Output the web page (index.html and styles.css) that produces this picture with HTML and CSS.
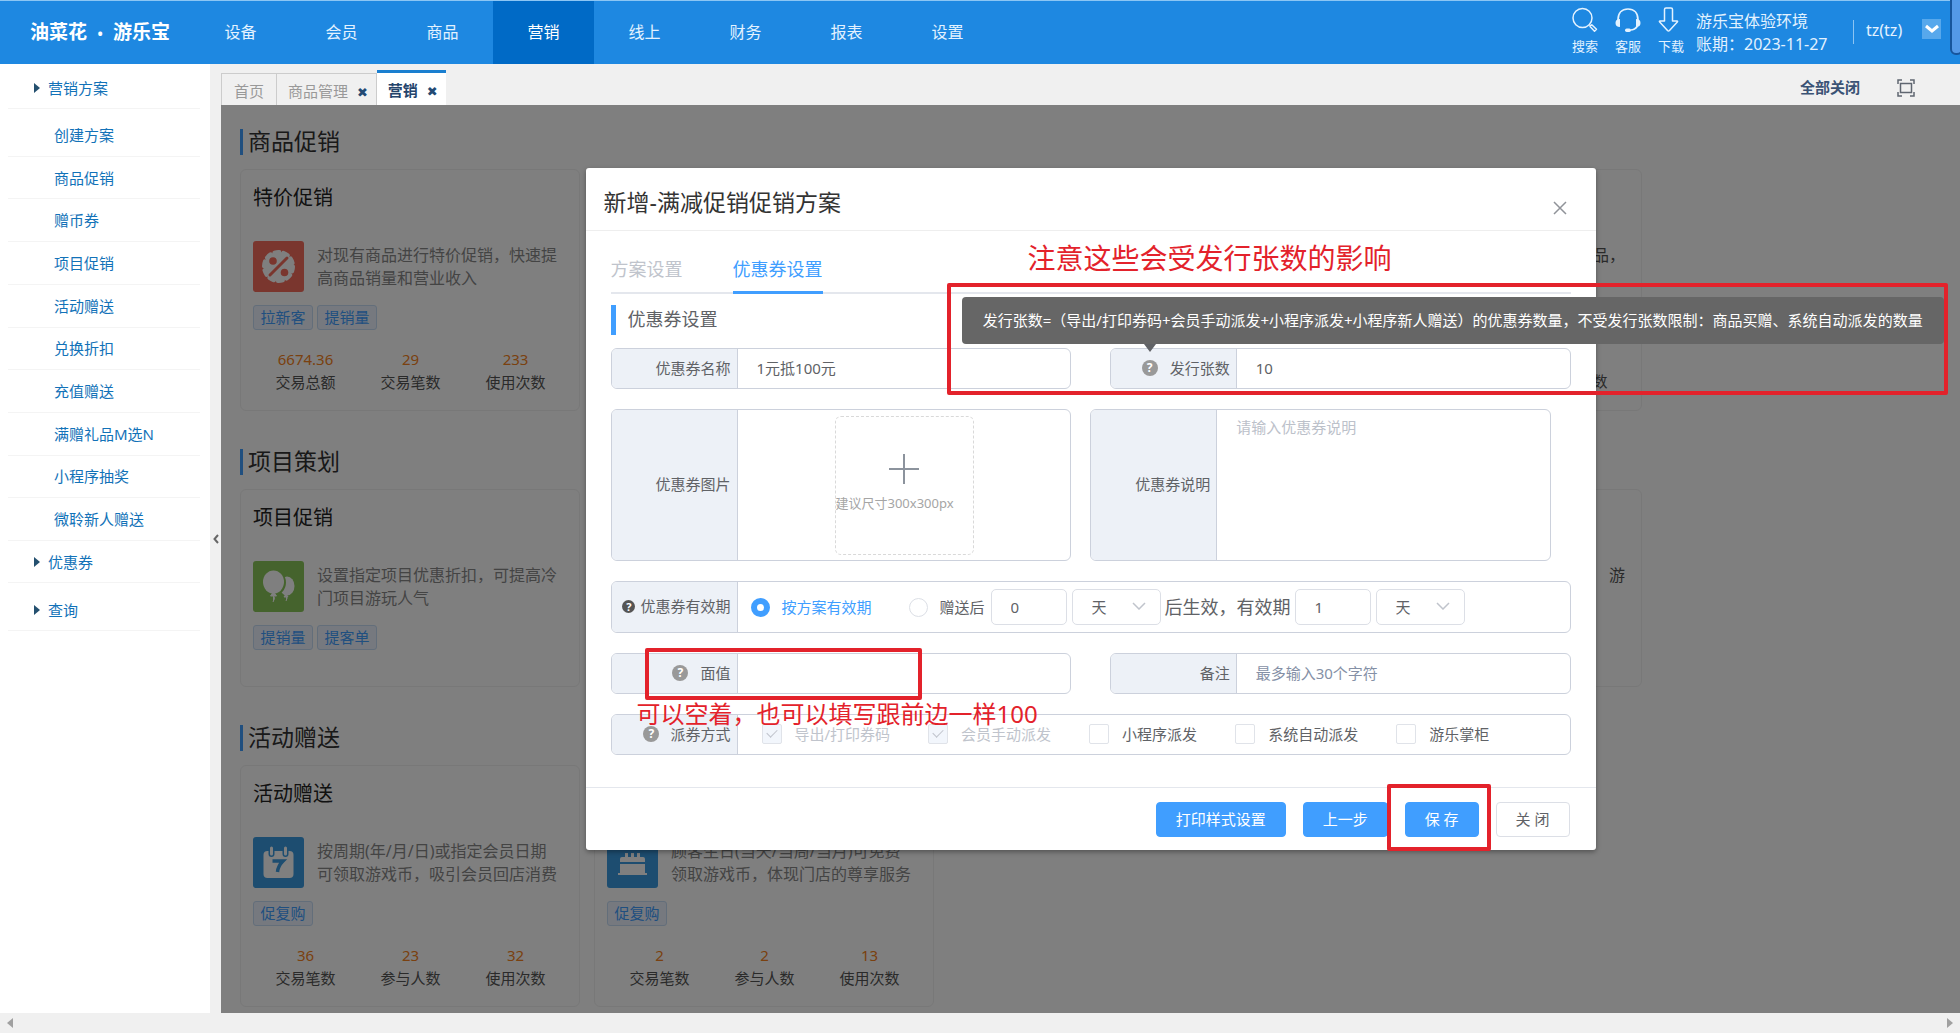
FILE: index.html
```html
<!DOCTYPE html>
<html lang="zh-CN">
<head>
<meta charset="utf-8">
<title>油菜花 · 游乐宝</title>
<link rel="stylesheet" href="styles.css">
</head>
<body>
<header class="topbar">
  <a class="logo" href="#">油菜花<span class="logo-dot">•</span>游乐宝</a>
  <nav class="mainnav">
    <a href="#">设备</a><a href="#">会员</a><a href="#">商品</a><a href="#" class="active">营销</a><a href="#">线上</a><a href="#">财务</a><a href="#">报表</a><a href="#">设置</a>
  </nav>
  <div class="tools">
    <a class="tool" href="#">
      <svg width="26" height="26" viewBox="0 0 26 26" fill="none" stroke="currentColor" stroke-width="1.5"><circle cx="10.500" cy="11" r="9.500"/><path d="M17 17.500l2 1.500"/><path d="M18 19.500l1.800-1.800 4.700 4.500-2 2z" stroke-linejoin="round"/></svg>
      搜索
    </a>
    <a class="tool" href="#">
      <svg width="26" height="26" viewBox="0 0 26 26" fill="none" stroke="currentColor" stroke-width="1.700"><path d="M3 13C3 6 7 2 13 2s10 4 10 11"/><path d="M22.500 19c-2 3-4 4-7 4"/><path d="M5 12v8c-3 0-4.500-1.500-4.500-4S2 12 5 12zM21 12v8c3 0 4.500-1.500 4.500-4S24 12 21 12z" fill="currentColor" stroke="none"/><rect x="10" y="21.500" width="6" height="3.500" rx="1.700" fill="currentColor" stroke="none"/></svg>
      客服
    </a>
    <a class="tool" href="#">
      <svg width="26" height="26" viewBox="0 0 26 26" fill="none" stroke="currentColor" stroke-width="1.500" stroke-linejoin="round"><path d="M6.500 2.500q0-1.500 1.500-1.500h5q1.500 0 1.500 1.500V14h4.500q1 0 .3 1L11.500 23.500q-1 1-2 0L1.700 15q-.7-1 .3-1h4.500z"/></svg>
      下载
    </a>
    <div class="env"><div>游乐宝体验环境</div><div>账期：2023-11-27</div></div>
    <div class="user">tz(tz)</div>
    <button class="user-menu" type="button" aria-label="用户菜单"><svg width="14" height="10" viewBox="0 0 14 10" fill="none" stroke="#fff" stroke-width="3"><path d="M1 2l6 5 6-5"/></svg></button>
  </div>
  <div class="topbar-thumb"></div>
</header>

<div class="workspace">
  <aside class="sidebar">
    <a class="side-head first" href="#">营销方案</a>
    <ul class="side-list">
      <li><a href="#">创建方案</a></li>
      <li><a href="#">商品促销</a></li>
      <li><a href="#">赠币券</a></li>
      <li><a href="#">项目促销</a></li>
      <li><a href="#">活动赠送</a></li>
      <li><a href="#">兑换折扣</a></li>
      <li><a href="#">充值赠送</a></li>
      <li><a href="#">满赠礼品M选N</a></li>
      <li><a href="#">小程序抽奖</a></li>
      <li><a href="#">微聆新人赠送</a></li>
    </ul>
    <a class="side-head" href="#">优惠券</a>
    <a class="side-head spaced" href="#">查询</a>
  </aside>
  <button class="collapse" type="button" aria-label="收起菜单"><svg width="6" height="10" viewBox="0 0 6 10" fill="none" stroke="#666" stroke-width="2"><path d="M5 1L1.500 5 5 9"/></svg></button>

  <div class="content">
    <div class="tabbar">
      <a class="tab" href="#">首页</a>
      <a class="tab" href="#">商品管理 <b class="x">✖</b></a>
      <a class="tab current" href="#">营销 <b class="x">✖</b></a>
      <a class="close-all" href="#">全部关闭</a>
      <svg class="fullscreen" width="18" height="18" viewBox="0 0 18 18" fill="none" stroke="#5f6670" stroke-width="1.500"><path d="M1 5V1h4M13 1h4v4M17 13v4h-4M5 17H1v-4"/><rect x="3.500" y="4.500" width="11" height="9"/></svg>
    </div>

    <main class="stage">
      <section class="group">
        <h2>商品促销</h2>
        <div class="cards">
          <article class="card">
            <h3>特价促销</h3>
            <div class="intro">
              <svg class="pic" viewBox="0 0 51 51"><rect width="51" height="51" rx="3" fill="#f56c5c"/><circle cx="25.500" cy="25.500" r="14.500" fill="#fff"/><circle cx="25.500" cy="25.500" r="14.500" fill="none" stroke="#fff" stroke-width="4" stroke-dasharray="5 4.110" stroke-linecap="round"/><path d="M17 34L34 17" stroke="#f56c5c" stroke-width="3" stroke-linecap="round"/><circle cx="20" cy="20" r="3.800" fill="#f56c5c"/><circle cx="31.500" cy="31.500" r="3.800" fill="#f56c5c"/></svg>
              <p>对现有商品进行特价促销，快速提<br>高商品销量和营业收入</p>
            </div>
            <div class="tags"><span>拉新客</span><span>提销量</span></div>
            <dl class="stats"><div><dd>6674.36</dd><dt>交易总额</dt></div><div><dd>29</dd><dt>交易笔数</dt></div><div><dd>233</dd><dt>使用次数</dt></div></dl>
          </article>
          <article class="card last">
            <div class="intro end"><p class="dark">品，</p></div>
            <dl class="stats"><div></div><div></div><div><dt>使用次数</dt></div></dl>
          </article>
        </div>
      </section>

      <section class="group">
        <h2>项目策划</h2>
        <div class="cards">
          <article class="card short">
            <h3>项目促销</h3>
            <div class="intro">
              <svg class="pic" viewBox="0 0 51 51"><rect width="51" height="51" rx="3" fill="#8ac75a"/><ellipse cx="34" cy="25" rx="7.500" ry="9.500" fill="#fff"/><path d="M33 33l-2 3h4zM33 35q2 2 0 5" fill="#fff" stroke="#fff"/><ellipse cx="21" cy="21.500" rx="12" ry="13" fill="#8ac75a"/><ellipse cx="20.500" cy="21" rx="10.500" ry="11.500" fill="#fff"/><path d="M20.500 31l-3 4h6zM20 34q3 3 0 7" fill="#fff" stroke="#fff"/></svg>
              <p>设置指定项目优惠折扣，可提高冷<br>门项目游玩人气</p>
            </div>
            <div class="tags"><span>提销量</span><span>提客单</span></div>
          </article>
          <article class="card short last">
            <div class="intro end"><p class="dark">游</p></div>
          </article>
        </div>
      </section>

      <section class="group">
        <h2>活动赠送</h2>
        <div class="cards">
          <article class="card">
            <h3>活动赠送</h3>
            <div class="intro">
              <svg class="pic" viewBox="0 0 51 51"><rect width="51" height="51" rx="3" fill="#3a9be0"/><rect x="10.500" y="14" width="30" height="27" rx="4" fill="#fff"/><path d="M18.500 12v5M32.500 12v5" stroke="#3a9be0" stroke-width="6" stroke-linecap="round"/><path d="M18.500 11v6M32.500 11v6" stroke="#fff" stroke-width="3" stroke-linecap="round"/><path d="M19.500 24H30q-5 5-5.500 11" fill="none" stroke="#3a9be0" stroke-width="3.500"/></svg>
              <p>按周期(年/月/日)或指定会员日期<br>可领取游戏币，吸引会员回店消费</p>
            </div>
            <div class="tags"><span>促复购</span></div>
            <dl class="stats"><div><dd>36</dd><dt>交易笔数</dt></div><div><dd>23</dd><dt>参与人数</dt></div><div><dd>32</dd><dt>使用次数</dt></div></dl>
          </article>
          <article class="card">
            <h3>生日赠送</h3>
            <div class="intro">
              <svg class="pic" viewBox="0 0 51 51"><rect width="51" height="51" rx="3" fill="#3a9be0"/><path d="M13 25v-3q0-2 2-2h3v-4h3v4h3v-4h3v4h3v-4h3v4h3q2 0 2 2v3zM13 27h25v9h2v2H11v-2h2z" fill="#fff"/></svg>
              <p>顾客生日(当天/当周/当月)可免费<br>领取游戏币，体现门店的尊享服务</p>
            </div>
            <div class="tags"><span>促复购</span></div>
            <dl class="stats"><div><dd>2</dd><dt>交易笔数</dt></div><div><dd>2</dd><dt>参与人数</dt></div><div><dd>13</dd><dt>使用次数</dt></div></dl>
          </article>
        </div>
      </section>

      <div class="mask">
        <form class="dialog" role="dialog" aria-labelledby="dlg-title">
          <header class="dlg-head">
            <h1 id="dlg-title">新增-满减促销促销方案</h1>
            <button class="dlg-close" type="button" aria-label="关闭"><svg width="14" height="14" viewBox="0 0 14 14" stroke="#909399" stroke-width="1.500"><path d="M1 1l12 12M13 1L1 13"/></svg></button>
          </header>
          <div class="dlg-body">
            <div class="steps"><a href="#">方案设置</a><a href="#" class="on">优惠券设置</a></div>
            <h2 class="sub">优惠券设置</h2>

            <div class="row">
              <div class="field"><label class="cap" for="name">优惠券名称</label><input class="plain" id="name" type="text" value="1元抵100元"></div>
              <div class="field"><label class="cap" for="count"><span class="help wide">?<span class="tip">发行张数=（导出/打印券码+会员手动派发+小程序派发+小程序新人赠送）的优惠券数量，不受发行张数限制：商品买赠、系统自动派发的数量</span></span>发行张数</label><input class="plain" id="count" type="text" value="10"></div>
            </div>

            <div class="row tight">
              <div class="field"><span class="cap">优惠券图片</span>
                <div class="upload-wrap"><button class="upload" type="button"><svg width="30" height="30" viewBox="0 0 30 30" stroke="#8c939d" stroke-width="2"><path d="M15 0v30M0 15h30"/></svg><span>建议尺寸300x300px</span></button></div>
              </div>
              <div class="field"><label class="cap" for="desc">优惠券说明</label><textarea class="plain" id="desc" placeholder="请输入优惠券说明"></textarea></div>
            </div>

            <div class="row">
              <div class="field full tall"><span class="cap"><span class="help dark">?</span>优惠券有效期</span>
                <div class="validity">
                  <label class="radio picked"><input type="radio" name="valid" checked>按方案有效期</label>
                  <label class="radio later"><input type="radio" name="valid">赠送后</label>
                  <input class="box" type="text" value="0" aria-label="赠送后天数">
                  <span class="select"><select aria-label="单位"><option>天</option></select><svg width="14" height="8" viewBox="0 0 14 8" fill="none" stroke="#c0c4cc" stroke-width="1.500"><path d="M1 1l6 6 6-6"/></svg></span>
                  <span class="say">后生效，有效期</span>
                  <input class="box" type="text" value="1" aria-label="有效期天数">
                  <span class="select"><select aria-label="有效期单位"><option>天</option></select><svg width="14" height="8" viewBox="0 0 14 8" fill="none" stroke="#c0c4cc" stroke-width="1.500"><path d="M1 1l6 6 6-6"/></svg></span>
                </div>
              </div>
            </div>

            <div class="row">
              <div class="field"><label class="cap" for="worth"><span class="help wide">?</span>面值</label><input class="plain" id="worth" type="text"></div>
              <div class="field"><label class="cap" for="memo">备注</label><input class="plain memo" id="memo" type="text" placeholder="最多输入30个字符"></div>
            </div>

            <div class="row">
              <div class="field full"><span class="cap"><span class="help">?</span>派券方式</span>
                <div class="checks">
                  <label class="off"><input type="checkbox" checked disabled>导出/打印券码</label>
                  <label class="off"><input type="checkbox" checked disabled>会员手动派发</label>
                  <label><input type="checkbox">小程序派发</label>
                  <label><input type="checkbox">系统自动派发</label>
                  <label><input type="checkbox">游乐掌柜</label>
                </div>
              </div>
            </div>
          </div>
          <footer class="dlg-foot">
            <button class="btn primary" type="button">打印样式设置</button>
            <button class="btn primary" type="button">上一步</button>
            <button class="btn primary" type="button">保 存</button>
            <button class="btn" type="button">关 闭</button>
          </footer>
          <div class="mark mark-count"></div>
          <div class="mark mark-worth"></div>
          <div class="mark mark-save"></div>
          <p class="note note-count">注意这些会受发行张数的影响</p>
          <p class="note note-worth">可以空着，也可以填写跟前边一样100</p>
        </form>
      </div>
    </main>
  </div>
</div>
<div class="hscroll"><i class="arrow-left"></i><i class="arrow-right"></i></div>
</body>
</html>
```
FILE: styles.css
```css
* { box-sizing: border-box; }
body {
  margin: 0;
  min-height: 100vh;
  display: flex;
  flex-direction: column;
  font: 15px/22px "Noto Sans", "Noto Sans CJK SC", sans-serif;
  color: #606266;
  background: #f0f0f0;
}
a { color: inherit; text-decoration: none; }
h1, h2, h3, p, dl, dd, dt, ul { margin: 0; padding: 0; font-weight: 400; }
ul { list-style: none; }
button, input, select, textarea { font: inherit; color: inherit; margin: 0; }
svg { display: block; flex: none; }

/* top bar */
.topbar {
  position: relative;
  display: flex;
  height: 64px;
  background: #1e88e1;
  border-top: 1px solid #8cc6f4;
  color: #e3f2ff;
}
.logo { width: 190px; padding-left: 30px; font-size: 19px; line-height: 62px; font-weight: 700; color: #fff; white-space: nowrap; }
.logo-dot { display: inline-block; width: 26px; text-align: center; font-size: 14px; }
.mainnav { display: flex; font-size: 16px; line-height: 62px; }
.mainnav a { width: 101px; text-align: center; }
.mainnav .active { background: #006ac6; color: #fff; }
.tools { margin-left: auto; display: flex; padding-right: 19px; }
.tool { width: 26px; margin: 6px 17px 0 0; font-size: 13px; line-height: 27px; white-space: nowrap; }
.env { width: 157px; padding-top: 9px; margin-left: -5px; font-size: 16px; line-height: 23px; white-space: nowrap; }
.user { border-left: 1px solid #8cc4f3; height: 24px; margin-top: 19px; width: 69px; padding-left: 12px; font-size: 16px; line-height: 20px; }
.user-menu { width: 19px; height: 20px; margin-top: 18px; padding: 0; border: 0; background: #57a8ec; display: flex; align-items: center; justify-content: center; }
.topbar-thumb { position: absolute; right: -3px; top: -9px; width: 13px; height: 63px; border: 2px solid #17559c; border-radius: 6px; background: #5499e8; }

/* frame */
.workspace { flex: 1; display: flex; }
.sidebar { width: 210px; background: #fff; color: #1272b8; padding: 0 10px 0 8px; }
.side-head { display: flex; align-items: center; height: 42px; border-bottom: 1px solid #f4f4f4; padding-left: 26px; }
.side-head::before { content: ""; border: 5px solid transparent; border-left: 6px solid #24506f; border-right: 0; margin-right: 8px; }
.side-head.first { margin-top: 3px; }
.side-head.spaced { margin-top: 6px; }
.side-list { display: grid; grid-auto-rows: 1fr; min-height: 427px; margin-top: 5px; }
.side-list li { display: flex; align-items: center; border-bottom: 1px solid #f4f4f4; padding-left: 46px; }
.collapse { width: 11px; padding: 0; border: 0; background: none; display: flex; align-items: center; justify-content: center; }
.content { flex: 1; min-width: 0; display: flex; flex-direction: column; }
.tabbar { display: flex; align-items: flex-end; height: 41px; color: #999; }
.tab { height: 32px; line-height: 34px; padding: 0 12px; border: 1px solid #ccc; border-width: 1px 1px 0; white-space: nowrap; }
.tab + .tab { border-left: 0; padding-left: 11px; padding-right: 8px; }
.tab .x { font-size: 13px; font-family: "DejaVu Sans", sans-serif; color: #234a74; margin-left: 5px; line-height: 20px; }
.tab.current { height: 35px; background: #fff; border: 0; border-top: 3px solid #1a7fd0; font-weight: 700; color: #24446c; }
.close-all { margin-left: auto; font-weight: 700; color: #3b5375; align-self: center; line-height: 41px; padding-top: 5px; }
.fullscreen { margin: 0 45px 8px 37px; }

/* promotion cards */
.stage { position: relative; flex: 1; background: #fff; padding: 24px 19px 5px; overflow: hidden; }
.group + .group { margin-top: 38px; }
.group h2 { border-left: 3px solid #409eff; padding-left: 5px; padding-bottom: 2px; font-size: 23px; line-height: 24px; color: #333; margin-bottom: 14px; }
.cards { display: grid; grid-template-columns: repeat(4, 340px); gap: 14px; }
.card { height: 242px; border: 1px solid #f0f0f0; border-radius: 6px; padding: 16px 12px 0; }
.card.short { height: 198px; }
.card.last { grid-column: 4; }
.card h3 { font-size: 20px; line-height: 24px; color: #222; margin-bottom: 31px; }
.intro { display: flex; gap: 13px; color: #888; }
.intro.end { justify-content: flex-end; padding-top: 55px; height: 106px; }
.pic { width: 51px; height: 51px; }
.intro p { padding-top: 3px; flex: 1; font-size: 16px; line-height: 23px; white-space: nowrap; }
.intro p.dark { text-align: right; color: #555; padding-right: 4px; }
.tags { display: flex; gap: 4px; margin-top: 13px; }
.tags span { width: 60px; height: 25px; line-height: 23px; text-align: center; border: 1px solid #c6dcf5; border-radius: 3px; background: #ecf3ff; color: #409eff; }
.stats { display: grid; grid-template-columns: repeat(3, 105px); margin-top: 18px; text-align: center; line-height: 23px; }
.card.last .stats { margin-top: 78px; }
.stats dd { color: #f58220; }
.stats dt { color: #555; }

/* dialog */
.mask { position: absolute; inset: 0; padding: 63px 12px 0; background: rgba(0,0,0,.5); display: flex; align-items: flex-start; justify-content: center; }
.dialog { position: relative; width: 100%; max-width: 1010px; background: #fff; border-radius: 3px; box-shadow: 0 2px 5px rgba(0,0,0,.35); }
.dlg-head { display: flex; justify-content: space-between; height: 63px; border-bottom: 1px solid #eee; padding: 17px 29px 0 18px; color: #333; }
.dlg-head h1 { font-size: 23px; line-height: 34px; }
.dlg-close { border: 0; background: none; padding: 0; height: 46px; }
.dlg-body { padding: 15px 25px 32px; }
.steps { display: flex; gap: 50px; height: 48px; border-bottom: 2px solid #e4e7ed; font-size: 18px; line-height: 46px; color: #c0c4cc; }
.steps a { height: 48px; }
.steps .on { color: #409eff; border-bottom: 3px solid #409eff; }
.sub { margin: 11px 0 13px; border-left: 5px solid #409eff; padding-left: 12px; font-size: 18px; line-height: 28px; padding-bottom: 2px; }
.row { display: flex; justify-content: space-between; }
.row + .row { margin-top: 20px; }
.row.tight { justify-content: flex-start; gap: 19px; }
.field { flex: 0 0 48%; display: flex; min-height: 41px; border: 1px solid #ccd1dc; border-radius: 6px; }
.field.full { flex-basis: 100%; }
.field.tall { min-height: 52px; }
.tight .field { min-height: 152px; }
.cap { flex: none; width: 126px; display: flex; align-items: center; justify-content: flex-end; padding: 0 6px 2px 0; background: #edf1f7; border-right: 1px solid #ccd1dc; border-radius: 5px 0 0 5px; white-space: nowrap; }
.plain { flex: 1; min-width: 0; border: 0; background: none; padding: 0 19px 2px; outline: 0; resize: none; border-radius: 6px; }
textarea.plain { padding-top: 6px; }
.plain::placeholder { color: #bcc1ca; opacity: 1; }
.memo::placeholder { color: #8590a6; }
.help { position: relative; width: 16px; height: 16px; border-radius: 50%; background: #999; color: #fff; font-size: 12px; font-weight: 700; line-height: 16px; text-align: center; margin-right: 11px; }
.help.wide { margin-right: 12px; }
.help.dark { width: 13px; height: 13px; font-size: 11px; line-height: 13px; background: #555; margin-right: 5px; }
.tip { position: absolute; left: -180px; bottom: 32px; width: 982px; height: 47px; line-height: 46px; border-radius: 4px; background: #666; font-size: 15px; font-weight: 400; }
.tip::after { content: ""; position: absolute; left: 182px; top: 47px; border: 6px solid transparent; border-top: 8px solid #606266; border-bottom: 0; }
.upload-wrap { flex: 1; padding: 6px 0 0 97px; }
.upload { width: 139px; height: 139px; padding: 37px 0 0; border: 1px dashed #d9d9d9; border-radius: 6px; background: #fff; color: #a5a5a5; font-size: 13px; text-align: left; white-space: nowrap; display: flex; flex-direction: column; }
.upload svg { margin: 0 auto 8px; }
.validity { display: flex; align-items: center; padding-left: 13px; white-space: nowrap; }
.radio { display: flex; align-items: center; gap: 12px; }
.radio input { appearance: none; width: 19px; height: 19px; border: 1px solid #dcdfe6; border-radius: 50%; background: #fff; }
.radio input:checked { border: 6px solid #409eff; }
.radio.picked { color: #409eff; }
.radio.later { margin: 0 6px 0 37px; }
.box { width: 76px; height: 36px; border: 1px solid #dcdfe6; border-radius: 5px; padding: 0 19px; margin-right: 5px; }
.select { position: relative; width: 89px; height: 36px; }
.select select { appearance: none; width: 100%; height: 100%; border: 1px solid #dcdfe6; border-radius: 5px; background: #fff; padding: 0 19px; }
.select svg { position: absolute; right: 15px; top: 13px; pointer-events: none; }
.say { font-size: 18px; margin: 0 4px; }
.checks { display: flex; align-items: center; gap: 38px; padding: 0 0 2px 24px; white-space: nowrap; }
.checks label { display: flex; align-items: center; gap: 13px; }
.checks input { appearance: none; width: 20px; height: 20px; border: 1px solid #e0e3e9; border-radius: 2px; background: #fff; }
.checks .off { color: #c0c4cc; }
.checks input:disabled { background: #f2f6fc; }
.checks input:checked::after { content: ""; display: block; width: 5px; height: 9px; margin: 2px 0 0 6px; border: solid #c0c4cc; border-width: 0 1px 1px 0; transform: rotate(45deg); }
.dlg-foot { display: flex; justify-content: flex-end; gap: 17px; border-top: 1px solid #e4e7ed; padding: 14px 26px 13px; }
.btn { height: 35px; padding: 0 19px 1px; border: 1px solid #dcdfe6; border-radius: 4px; background: #fff; white-space: nowrap; }
.btn.primary { background: #409eff; border-color: #409eff; color: #fff; }

/* marks drawn over the dialog */
.mark { position: absolute; border: 4px solid #e3222b; border-radius: 2px; pointer-events: none; }
.mark-count { left: 361px; top: 115px; width: 1001px; height: 112px; }
.mark-worth { left: 59px; top: 480px; width: 277px; height: 52px; }
.mark-save { left: 801px; top: 616px; width: 104px; height: 67px; }
.note { position: absolute; color: #e3222b; white-space: nowrap; }
.note-count { left: 442px; top: 70px; font-size: 28px; line-height: 40px; }
.note-worth { left: 51px; top: 529px; font-size: 24px; line-height: 34px; }

/* horizontal scrollbar */
.hscroll { height: 20px; display: flex; align-items: center; justify-content: space-between; padding: 0 7px; background: #f0f0f0; }
.arrow-left, .arrow-right { border: 5px solid transparent; }
.arrow-left { border-right: 6px solid #a0a0a0; border-left: 0; }
.arrow-right { border-left: 6px solid #a0a0a0; border-right: 0; }
```
